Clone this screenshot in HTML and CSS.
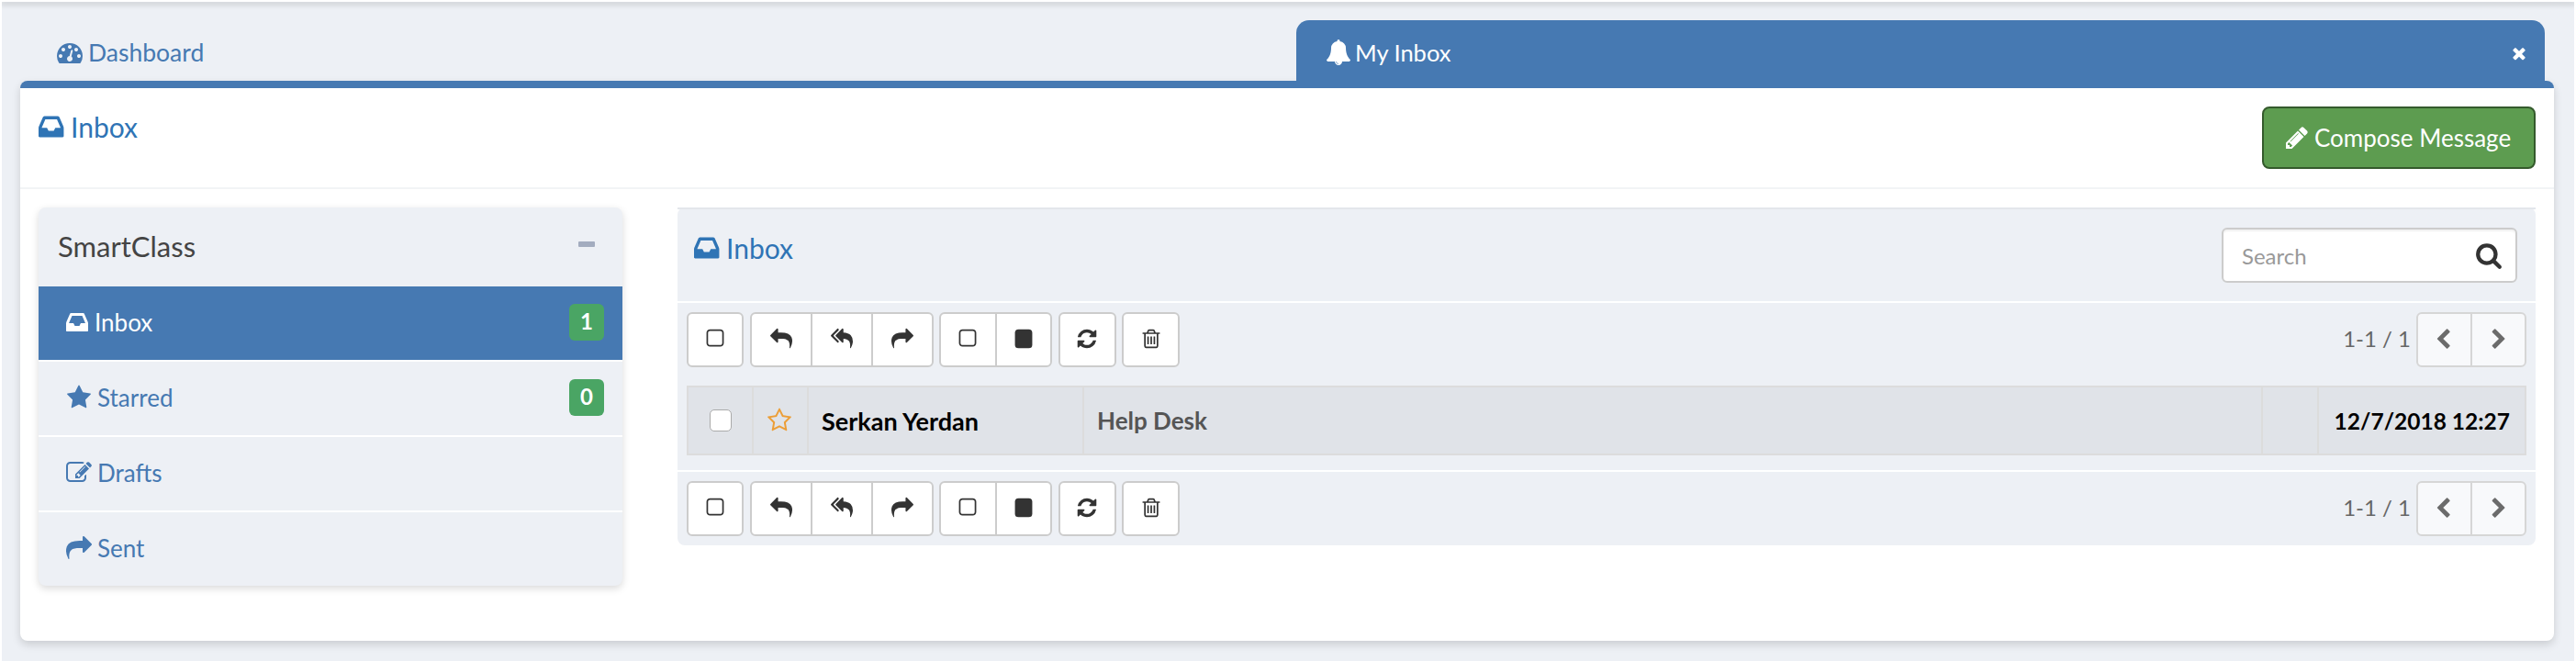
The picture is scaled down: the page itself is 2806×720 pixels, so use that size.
FILE: index.html
```html
<!DOCTYPE html>
<html lang="en">
<head>
    <meta charset="UTF-8">
    <title>My Inbox</title>
    <link rel="stylesheet" href="styles.css">
</head>
<body>
    <svg class="icon-defs" xmlns="http://www.w3.org/2000/svg">
        <symbol id="i-dashboard" viewBox="0 0 1792 1792"><path d="M384 1152q0-53-37.5-90.5t-90.5-37.5-90.5 37.5-37.5 90.5 37.5 90.5 90.5 37.5 90.5-37.5 37.5-90.5zm192-448q0-53-37.5-90.5t-90.5-37.5-90.5 37.5-37.5 90.5 37.5 90.5 90.5 37.5 90.5-37.5 37.5-90.5zm428 481l101-382q6-26-7.5-48.5t-38.5-29.5-48 6.5-30 39.5l-101 382q-60 5-107 43.5t-63 98.5q-20 77 20 146t117 89 146-20 89-117q16-60-6-117t-72-91zm660-33q0-53-37.5-90.5t-90.5-37.5-90.5 37.5-37.5 90.5 37.5 90.5 90.5 37.5 90.5-37.5 37.5-90.5zm-640-640q0-53-37.5-90.5t-90.5-37.5-90.5 37.5-37.5 90.5 37.5 90.5 90.5 37.5 90.5-37.5 37.5-90.5zm448 192q0-53-37.5-90.5t-90.5-37.5-90.5 37.5-37.5 90.5 37.5 90.5 90.5 37.5 90.5-37.5 37.5-90.5zm320 448q0 261-141 483-19 29-54 29h-1402q-35 0-54-29-141-221-141-483 0-182 71-348t191-286 286-191 348-71 348 71 286 191 191 286 71 348z"/></symbol>
        <symbol id="i-bell" viewBox="0 0 1792 1792"><path d="M912 1696q0-16-16-16-59 0-101.5-42.5t-42.5-101.5q0-16-16-16t-16 16q0 73 51.5 124.5t124.5 51.5q16 0 16-16zm816-288q0 52-38 90t-90 38h-448q0 106-75 181t-181 75-181-75-75-181h-448q-52 0-90-38t-38-90q50-42 91-88t85-119.5 74.5-158.5 50-206 19.5-260q0-152 117-282.5t307-158.5q-8-19-8-39 0-40 28-68t68-28 68 28 28 68q0 20-8 39 190 28 307 158.5t117 282.5q0 139 19.5 260t50 206 74.5 158.5 85 119.5 91 88z"/></symbol>
        <symbol id="i-close" viewBox="0 0 1792 1792"><path d="M1490 1322q0 40-28 68l-136 136q-28 28-68 28t-68-28l-294-294-294 294q-28 28-68 28t-68-28l-136-136q-28-28-28-68t28-68l294-294-294-294q-28-28-28-68t28-68l136-136q28-28 68-28t68 28l294 294 294-294q28-28 68-28t68 28l136 136q28 28 28 68t-28 68l-294 294 294 294q28 28 28 68z"/></symbol>
        <symbol id="i-inbox" viewBox="0 0 1792 1792"><path d="M1023 960h316q-1-3-2.5-8.5t-2.5-7.5l-212-496h-708l-212 496q-1 3-2.5 8.5t-2.5 7.5h316l95 192h320zm513 30v482q0 26-19 45t-45 19h-1408q-26 0-45-19t-19-45v-482q0-62 25-123l238-552q10-25 36.5-42t52.5-17h832q26 0 52.5 17t36.5 42l238 552q25 61 25 123z"/></symbol>
        <symbol id="i-pencil" viewBox="0 0 1792 1792"><path d="M491 1536l91-91-235-235-91 91v107h128v128h107zm523-928q0-22-22-22-10 0-17 7l-542 542q-7 7-7 17 0 22 22 22 10 0 17-7l542-542q7-7 7-17zm-54-192l416 416-832 832h-416v-416zm683 96q0 53-37 90l-166 166-416-416 166-165q36-38 90-38 53 0 91 38l235 234q37 39 37 91z"/></symbol>
        <symbol id="i-edit" viewBox="0 0 1792 1792"><path d="M888 1184l116-116-152-152-116 116v56h96v96h56zm440-720q-16-16-33 1l-350 350q-17 17-1 33t33-1l350-350q17-17 1-33zm80 594v190q0 119-84.5 203.5t-203.5 84.5h-832q-119 0-203.5-84.5t-84.5-203.5v-832q0-119 84.5-203.5t203.5-84.5h832q63 0 117 25 15 7 18 23 3 17-9 29l-49 49q-14 14-32 8-23-6-45-6h-832q-66 0-113 47t-47 113v832q0 66 47 113t113 47h832q66 0 113-47t47-113v-126q0-13 9-22l64-64q15-15 35-7t20 29zm-96-738l288 288-672 672h-288v-288zm444 132l-92 92-288-288 92-92q28-28 68-28t68 28l152 152q28 28 28 68t-28 68z"/></symbol>
        <symbol id="i-star" viewBox="0 0 1792 1792"><path d="M1728 647q0 22-26 48l-363 354 86 500q1 7 1 20 0 21-10.5 35.5t-30.5 14.5q-19 0-40-12l-449-236-449 236q-22 12-40 12-21 0-31.5-14.5t-10.5-35.5q0-6 2-20l86-500-364-354q-25-27-25-48 0-37 56-46l502-73 225-455q19-41 49-41t49 41l225 455 502 73q56 9 56 46z"/></symbol>
        <symbol id="i-star-o" viewBox="0 0 1792 1792"><path d="M1201 1004l306-297-422-62-189-382-189 382-422 62 306 297-73 421 378-199 377 199zm527-357q0 22-26 48l-363 354 86 500q1 7 1 20 0 50-41 50-19 0-40-12l-449-236-449 236q-22 12-40 12-21 0-31.5-14.5t-10.5-35.5q0-6 2-20l86-500-364-354q-25-27-25-48 0-37 56-46l502-73 225-455q19-41 49-41t49 41l225 455 502 73q56 9 56 46z"/></symbol>
        <symbol id="i-reply" viewBox="0 0 1792 1792"><path d="M1792 1120q0 166-127 451-3 7-10.5 24t-13.5 30-13 22q-12 17-28 17-15 0-23.5-10t-8.5-25q0-9 2.5-26.5t2.5-23.5q5-68 5-123 0-101-17.5-181t-48.5-138.5-80-101-105.5-69.5-133-42.5-154-21.5-175.5-6h-224v256q0 26-19 45t-45 19-45-19l-512-512q-19-19-19-45t19-45l512-512q19-19 45-19t45 19 19 45v256h224q713 0 875 403 53 134 53 333z"/></symbol>
        <symbol id="i-reply-all" viewBox="0 0 1792 1792"><path d="M640 1082v70q0 42-39 59-13 5-25 5-27 0-45-19l-512-512q-19-19-19-45t19-45l512-512q29-31 70-14 39 17 39 59v69l-397 398q-19 19-19 45t19 45zm1152 38q0 58-17 133.5t-38.5 138-48 125-40.5 90.5l-20 40q-8 17-28 17-6 0-9-1-25-8-23-34 43-400-106-565-64-71-170.5-110.5t-267.5-52.5v251q0 42-39 59-13 5-25 5-27 0-45-19l-512-512q-19-19-19-45t19-45l512-512q18-19 45-19 12 0 25 5 39 17 39 59v262q411 28 599 221 169 173 169 509z"/></symbol>
        <symbol id="i-share" viewBox="0 0 1792 1792"><path d="M1792 640q0 26-19 45l-512 512q-19 19-45 19t-45-19-19-45v-256h-224q-98 0-175.5 6t-154 21.5-133 42.5-105.5 69.5-80 101-48.5 138.5-17.5 181q0 55 5 123 0 6 2.5 23.5t2.5 26.5q0 15-8.5 25t-23.5 10q-16 0-28-17-7-9-13-22t-13.5-30-10.5-24q-127-285-127-451 0-199 53-333 162-403 875-403h224v-256q0-26 19-45t45-19 45 19l512 512q19 19 19 45z"/></symbol>
        <symbol id="i-square-o" viewBox="0 0 1792 1792"><path d="M1312 256h-832q-66 0-113 47t-47 113v832q0 66 47 113t113 47h832q66 0 113-47t47-113v-832q0-66-47-113t-113-47zm288 160v832q0 119-84.5 203.5t-203.5 84.5h-832q-119 0-203.5-84.5t-84.5-203.5v-832q0-119 84.5-203.5t203.5-84.5h832q119 0 203.5 84.5t84.5 203.5z"/></symbol>
        <symbol id="i-square" viewBox="0 0 1792 1792"><rect x="192" y="128" width="1408" height="1536" rx="288"/></symbol>
        <symbol id="i-refresh" viewBox="0 0 1792 1792"><path d="M1639 1056q0 5-1 7-64 268-268 434.5t-478 166.5q-146 0-282.5-55t-243.5-157l-129 129q-19 19-45 19t-45-19-19-45v-448q0-26 19-45t45-19h448q26 0 45 19t19 45-19 45l-137 137q71 66 161 102t187 36q134 0 250-65t186-179q11-17 53-117 8-23 30-23h192q13 0 22.5 9.5t9.5 22.5zm25-800v448q0 26-19 45t-45 19h-448q-26 0-45-19t-19-45 19-45l138-138q-148-137-349-137-134 0-250 65t-186 179q-11 17-53 117-8 23-30 23h-199q-13 0-22.5-9.5t-9.5-22.5v-7q65-268 270-434.5t480-166.5q146 0 284 55.5t245 156.5l130-129q19-19 45-19t45 19 19 45z"/></symbol>
        <symbol id="i-trash" viewBox="0 0 1792 1792"><path d="M704 736v576q0 14-9 23t-23 9h-64q-14 0-23-9t-9-23v-576q0-14 9-23t23-9h64q14 0 23 9t9 23zm256 0v576q0 14-9 23t-23 9h-64q-14 0-23-9t-9-23v-576q0-14 9-23t23-9h64q14 0 23 9t9 23zm256 0v576q0 14-9 23t-23 9h-64q-14 0-23-9t-9-23v-576q0-14 9-23t23-9h64q14 0 23 9t9 23zm128 724v-948h-896v948q0 22 7 40.5t14.5 27 10.5 8.5h832q3 0 10.5-8.5t14.5-27 7-40.5zm-672-1076h448l-48-117q-7-9-17-11h-317q-10 2-17 11zm928 32v64q0 14-9 23t-23 9h-96v948q0 83-47 143.5t-113 60.5h-832q-66 0-113-58.5t-47-141.5v-952h-96q-14 0-23-9t-9-23v-64q0-14 9-23t23-9h309l70-167q15-37 54-63t79-26h320q40 0 79 26t54 63l70 167h309q14 0 23 9t9 23z"/></symbol>
        <symbol id="i-search" viewBox="0 0 1792 1792"><path d="M1216 832q0-185-131.5-316.5t-316.5-131.5-316.5 131.5-131.5 316.5 131.5 316.5 316.5 131.5 316.5-131.5 131.5-316.5zm512 832q0 52-38 90t-90 38q-54 0-90-38l-343-342q-179 124-399 124-143 0-273.5-55.5t-225-150-150-225-55.5-273.5 55.5-273.5 150-225 225-150 273.5-55.5 273.5 55.5 225 150 150 225 55.5 273.5q0 220-124 399l343 343q37 37 37 90z"/></symbol>
        <symbol id="i-left" viewBox="0 0 1792 1792"><path d="M1299 365l-531 531 531 531q19 19 19 45t-19 45l-166 166q-19 19-45 19t-45-19l-742-742q-19-19-19-45t19-45l742-742q19-19 45-19t45 19l166 166q19 19 19 45t-19 45z"/></symbol>
        <symbol id="i-right" viewBox="0 0 1792 1792"><path d="M1363 941l-742 742q-19 19-45 19t-45-19l-166-166q-19-19-19-45t19-45l531-531-531-531q-19-19-19-45t19-45l166-166q19-19 45-19t45 19l742 742q19 19 19 45t-19 45z"/></symbol>
    </svg>

    <div class="top-edge"></div>

    <div class="page">
        <div class="tabs">
            <a class="tab">
                <svg class="ico"><use href="#i-dashboard"/></svg>
                <span>Dashboard</span>
            </a>
            <a class="tab tab-active">
                <svg class="ico"><use href="#i-bell"/></svg>
                <span>My Inbox</span>
                <svg class="ico tab-close"><use href="#i-close"/></svg>
            </a>
        </div>

        <div class="panel">
            <div class="panel-head">
                <h1 class="page-title">
                    <svg class="ico ico-inbox"><use href="#i-inbox"/></svg>
                    <span>Inbox</span>
                </h1>
                <button class="compose">
                    <svg class="ico"><use href="#i-pencil"/></svg>
                    <span>Compose Message</span>
                </button>
            </div>

            <div class="panel-body">
                <div class="sidebar">
                    <div class="side-head">
                        <span>SmartClass</span>
                        <i class="collapse"></i>
                    </div>
                    <a class="side-item active">
                        <svg class="ico ico-inbox"><use href="#i-inbox"/></svg>
                        <span>Inbox</span>
                        <b class="badge">1</b>
                    </a>
                    <a class="side-item">
                        <svg class="ico"><use href="#i-star"/></svg>
                        <span>Starred</span>
                        <b class="badge">0</b>
                    </a>
                    <a class="side-item">
                        <svg class="ico"><use href="#i-edit"/></svg>
                        <span>Drafts</span>
                    </a>
                    <a class="side-item">
                        <svg class="ico"><use href="#i-share"/></svg>
                        <span>Sent</span>
                    </a>
                </div>

                <div class="mailbox">
                    <div class="mail-head">
                        <h2 class="mail-title">
                            <svg class="ico ico-inbox"><use href="#i-inbox"/></svg>
                            <span>Inbox</span>
                        </h2>
                        <div class="search">
                            <input type="text" placeholder="Search">
                            <svg class="ico"><use href="#i-search"/></svg>
                        </div>
                    </div>

                    <div class="mail-list">
                        <div class="toolbar">
                            <button class="btn btn-single"><svg class="ico"><use href="#i-square-o"/></svg></button>
                            <div class="btn-group group-3">
                                <button class="btn"><svg class="ico"><use href="#i-reply"/></svg></button>
                                <button class="btn"><svg class="ico"><use href="#i-reply-all"/></svg></button>
                                <button class="btn"><svg class="ico"><use href="#i-share"/></svg></button>
                            </div>
                            <div class="btn-group group-2">
                                <button class="btn"><svg class="ico"><use href="#i-square-o"/></svg></button>
                                <button class="btn"><svg class="ico"><use href="#i-square"/></svg></button>
                            </div>
                            <button class="btn btn-tool"><svg class="ico"><use href="#i-refresh"/></svg></button>
                            <button class="btn btn-tool"><svg class="ico"><use href="#i-trash"/></svg></button>
                            <div class="pager">
                                <span>1-1 / 1</span>
                                <div class="btn-group pager-btns">
                                    <button class="btn"><svg class="ico"><use href="#i-left"/></svg></button>
                                    <button class="btn"><svg class="ico"><use href="#i-right"/></svg></button>
                                </div>
                            </div>
                        </div>

                        <table class="messages">
                            <tr>
                                <td class="col-check"><i class="checkbox"></i></td>
                                <td class="col-star"><svg class="ico"><use href="#i-star-o"/></svg></td>
                                <td class="col-name">Serkan Yerdan</td>
                                <td class="col-subject">Help Desk</td>
                                <td class="col-attach"></td>
                                <td class="col-date">12/7/2018 12:27</td>
                            </tr>
                        </table>
                    </div>

                    <div class="toolbar">
                        <button class="btn btn-single"><svg class="ico"><use href="#i-square-o"/></svg></button>
                        <div class="btn-group group-3">
                            <button class="btn"><svg class="ico"><use href="#i-reply"/></svg></button>
                            <button class="btn"><svg class="ico"><use href="#i-reply-all"/></svg></button>
                            <button class="btn"><svg class="ico"><use href="#i-share"/></svg></button>
                        </div>
                        <div class="btn-group group-2">
                            <button class="btn"><svg class="ico"><use href="#i-square-o"/></svg></button>
                            <button class="btn"><svg class="ico"><use href="#i-square"/></svg></button>
                        </div>
                        <button class="btn btn-tool"><svg class="ico"><use href="#i-refresh"/></svg></button>
                        <button class="btn btn-tool"><svg class="ico"><use href="#i-trash"/></svg></button>
                        <div class="pager">
                            <span>1-1 / 1</span>
                            <div class="btn-group pager-btns">
                                <button class="btn"><svg class="ico"><use href="#i-left"/></svg></button>
                                <button class="btn"><svg class="ico"><use href="#i-right"/></svg></button>
                            </div>
                        </div>
                    </div>
                </div>
            </div>
        </div>
    </div>
</body>
</html>
```

FILE: styles.css
```css
* {
    box-sizing: border-box;
}

html, body {
    height: 720px;
    overflow: hidden;
}

body {
    margin: 0;
    background: #edf0f5;
    border-left: 2px solid #fff;
    border-right: 2px solid #fff;
    font-family: Lato, "Liberation Sans", sans-serif;
    font-size: 26px;
    color: #333;
}

.icon-defs {
    display: none;
}

.ico {
    width: 28px;
    height: 28px;
    fill: currentColor;
    flex: none;
}

.ico-inbox {
    margin-right: -3px;
}

.top-edge {
    height: 2px;
    margin: 0 -2px;
    background: #fff;
    box-shadow: 0 2px 6px rgba(0,0,0,0.35);
}

.page {
    padding: 20px 22px 0 20px;
}

/* tabs */
.tabs {
    display: flex;
    gap: 20px;
    padding: 0 10px;
    height: 66px;
}

.tab {
    flex: 1;
    display: flex;
    align-items: center;
    gap: 6px;
    padding: 4px 20px 0 30px;
    font-size: 26.5px;
    color: #4679b2;
}

.tab-active {
    background: #4679b2;
    color: #fff;
    border-radius: 14px 14px 0 0;
    padding-left: 32px;
    padding-right: 18px;
    gap: 4px;
    font-size: 25.5px;
}

.tab-close {
    width: 20px;
    height: 20px;
    margin-left: auto;
    margin-top: 2px;
}

/* main panel */
.panel {
    background: #fff;
    border-top: 8px solid #4679b2;
    border-radius: 8px;
    height: 610px;
    box-shadow: 0 4px 10px rgba(0,0,0,0.15);
}

.panel-head {
    display: flex;
    justify-content: space-between;
    height: 110px;
    padding: 20px 20px 0;
    border-bottom: 2px solid #f2f4f6;
}

.page-title {
    display: flex;
    align-items: center;
    gap: 6px;
    height: 44px;
    margin: 0;
    font-size: 30px;
    font-weight: 400;
    color: #2f74b5;
}

.page-title .ico, .mail-title .ico {
    width: 32px;
    height: 32px;
}

.compose {
    display: flex;
    align-items: center;
    gap: 5px;
    width: 298px;
    height: 68px;
    padding: 0 0 0 22px;
    background: #5d9c50;
    border: 2px solid #345a2c;
    border-radius: 8px;
    color: #fff;
    font: inherit;
    white-space: nowrap;
}

.panel-body {
    display: flex;
    gap: 60px;
    padding: 20px;
}

/* sidebar */
.sidebar {
    width: 636px;
    flex: none;
    background: #edf0f5;
    border-radius: 8px;
    box-shadow: 0 3px 8px rgba(0,0,0,0.15);
    overflow: hidden;
}

.side-head {
    display: flex;
    align-items: center;
    justify-content: space-between;
    height: 86px;
    padding: 0 30px 2px 21px;
    font-size: 31px;
    color: #444;
}

.collapse {
    width: 18px;
    height: 6px;
    margin-top: -4px;
    background: #a3acbf;
    border-radius: 1px;
}

.side-item {
    display: flex;
    align-items: center;
    gap: 6px;
    height: 82px;
    padding: 0 20px 2px 30px;
    border-bottom: 2px solid #fff;
    color: #4679b2;
}

.side-item:last-child {
    border-bottom: 0;
    height: 80px;
}

.side-item.active {
    background: #4679b2;
    color: #fff;
}

.badge {
    display: flex;
    align-items: center;
    justify-content: center;
    width: 38px;
    height: 40px;
    padding-bottom: 3px;
    margin-left: auto;
    background: #4aa564;
    border-radius: 6px;
    color: #fff;
    font-size: 24px;
}

/* mailbox */
.mailbox {
    width: 2024px;
    height: 368px;
    background: #edf0f5;
    border-radius: 8px;
}

.mail-head {
    display: flex;
    align-items: center;
    justify-content: space-between;
    height: 104px;
    padding: 0 20px 0 18px;
    border-bottom: 2px solid #fff;
    border-top: 2px solid #e3e6eb;
}

.mail-title {
    display: flex;
    align-items: center;
    gap: 6px;
    margin: -17px 0 0;
    font-size: 30px;
    font-weight: 400;
    color: #2f74b5;
}

.search {
    display: flex;
    align-items: center;
    width: 322px;
    height: 60px;
    padding: 0 14px 0 20px;
    background: #fff;
    border: 2px solid #ccc;
    border-radius: 6px;
    box-shadow: inset 0 2px 2px rgba(0,0,0,0.06);
}

.search input {
    flex: 1;
    width: 100%;
    padding: 0;
    border: 0;
    outline: 0;
    background: transparent;
    font: inherit;
    font-size: 24px;
}

.search input::placeholder {
    color: #999;
}

.search .ico {
    width: 30px;
    height: 30px;
}

.mail-list {
    border-bottom: 2px solid #fff;
    padding-bottom: 16px;
}

.toolbar {
    display: flex;
    align-items: center;
    gap: 6.5px;
    height: 80px;
    padding: 10px;
}

.btn {
    display: flex;
    align-items: center;
    justify-content: center;
    height: 60px;
    padding: 0 0 2px;
    background: #fff;
    border: 2px solid #ccc;
    border-radius: 6px;
    color: #333;
}

.btn .ico {
    width: 24px;
    height: 24px;
}

.btn-single {
    width: 62px;
}

.btn-tool {
    width: 63px;
}

.btn-group {
    display: flex;
}

.btn-group .btn {
    flex: 1;
    border-radius: 0;
    margin-left: -2px;
}

.btn-group .btn:first-child {
    margin-left: 0;
    border-radius: 6px 0 0 6px;
}

.btn-group .btn:last-child {
    border-radius: 0 6px 6px 0;
}

.group-3 {
    width: 200px;
}

.group-2 {
    width: 123px;
}

.pager {
    display: flex;
    align-items: center;
    gap: 6px;
    margin-left: auto;
    color: #666;
    font-size: 24px;
}

.pager span {
    padding-bottom: 3px;
}

.pager-btns {
    width: 120px;
}

.pager-btns .btn {
    background: #f8f9fb;
    color: #6b6b6b;
    border-color: #d6d6d6;
}

.messages {
    width: 2004px;
    height: 76px;
    margin: 10px 10px 0;
    border-collapse: collapse;
    table-layout: fixed;
    background: #e0e3e8;
}

.messages td {
    border: 2px solid #dcdcdc;
    padding: 0 16px;
    font-weight: 700;
    white-space: nowrap;
}

.col-check {
    width: 71px;
    text-align: center;
}

.col-star {
    width: 60px;
    color: #ec9e37;
    text-align: center;
}

.messages .col-star {
    padding: 6px 2px 0 0;
}

.messages .col-name {
    width: 300px;
    padding-left: 14px;
    color: #000;
    font-size: 27px;
}

.messages .col-subject {
    padding-left: 14px;
    color: #555;
}

.col-attach {
    width: 61px;
}

.messages .col-date {
    width: 226px;
    padding: 0 16px 0 0;
    color: #000;
    font-size: 24.5px;
    text-align: right;
}

.checkbox {
    display: block;
    width: 24px;
    height: 24px;
    margin: 0 auto;
    background: #fff;
    border: 1px solid #aaa;
    border-radius: 5px;
}
```
